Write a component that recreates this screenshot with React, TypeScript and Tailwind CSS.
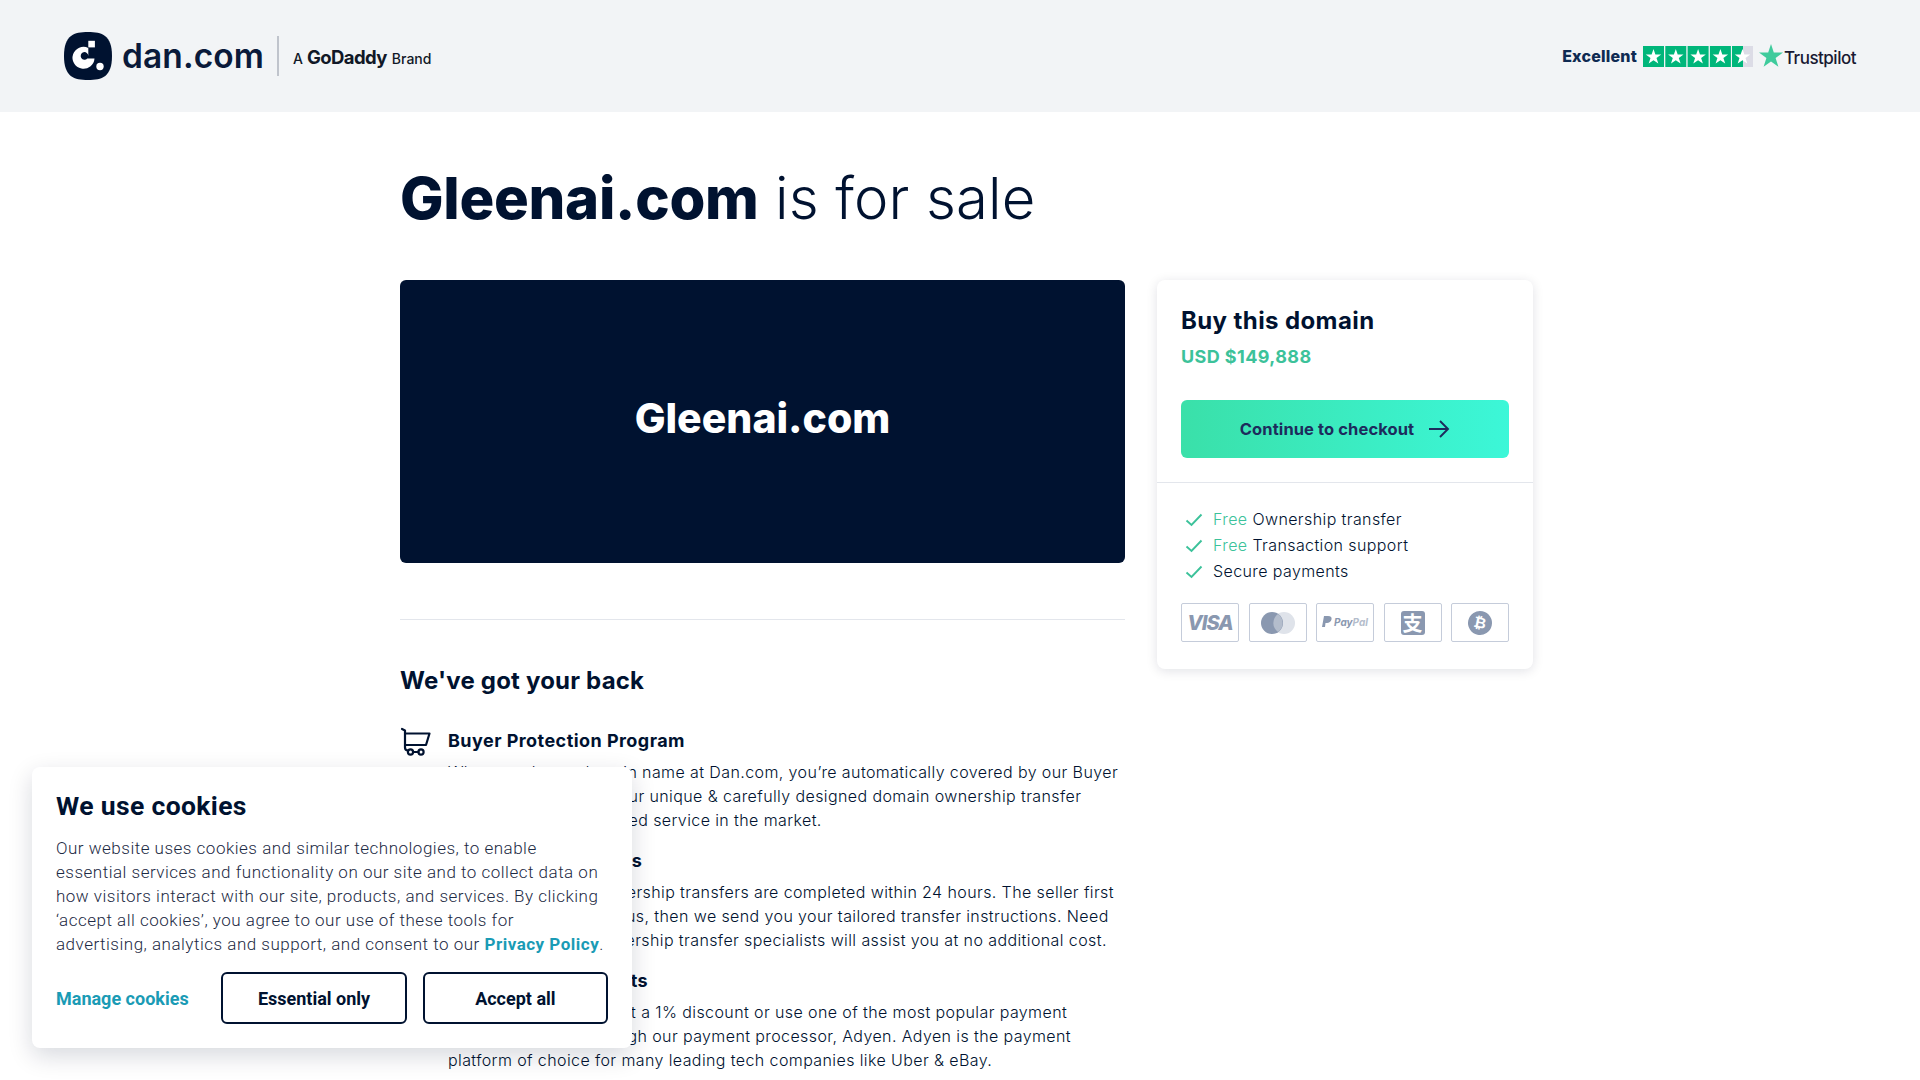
import React from "react";

const body = "font-['Inter','Liberation_Sans',sans-serif]";

function Star({ x, half }: { x: number; half?: boolean }) {
  return (
    <g transform={`translate(${x} 0)`}>
      <rect width="21" height="21" fill={half ? "#dcdce6" : "#00b67a"} />
      {half && <rect width="11" height="21" fill="#00b67a" />}
      <path d="M10.5 3l1.9 5.6h5.8l-4.700 3.400 1.800 5.600-4.800-3.400-4.800 3.400 1.800-5.600-4.700-3.400h5.800z" fill="#fff" />
    </g>
  );
}

function Check() {
  return (
    <svg width="18" height="14" viewBox="0 0 18 14" fill="none" stroke="#3cc29a" strokeWidth="1.9" className="shrink-0 mt-[6px]">
      <path d="M1.5 7.5l5 4.5 10-10.5" />
    </svg>
  );
}

function Pay({ children }: { children: React.ReactNode }) {
  return <div className="w-[58px] h-[39px] border border-[#c5ccda] rounded-[2px] flex items-center justify-center">{children}</div>;
}

function Feature({ title, lines, icon }: { title: string; lines: string[]; icon?: React.ReactNode }) {
  return (
    <div className="flex">
      <div className="w-[48px] shrink-0">{icon}</div>
      <div>
        <h3 className="text-[18px] leading-[24px] font-bold tracking-[0.45px] text-[#001230]">{title}</h3>
        <p className="mt-[7px] text-[16px] leading-[24px] font-light tracking-[0.4px] text-[#001230] whitespace-nowrap">
          {lines.map((l) => (
            <span key={l} className="block">{l}</span>
          ))}
        </p>
      </div>
    </div>
  );
}

export default function App() {
  return (
    <div className={`${body} relative h-screen overflow-hidden bg-white text-[#001230]`}>
      <header className="h-[112px] bg-[#f2f4f6] flex items-center justify-between pl-[64px] pr-[64px]">
        <div className="flex items-center">
          <svg width="48" height="48" viewBox="0 0 48 48">
            <path d="M24 0c14 0 24 3 24 24s-10 24-24 24S0 45 0 24 10 0 24 0z" fill="#001230" />
            <rect x="24.300" y="8.800" width="6.600" height="6.600" fill="#fff" />
            <path d="M24.300 15.900A11 11 0 1 0 30.500 26.500H23.300A3.800 3.800 0 1 1 24.300 23.900z" fill="#fff" />
            <circle cx="36" cy="34.500" r="3.700" fill="#fff" />
          </svg>
          <span className="ml-[10px] text-[33.500px] font-semibold tracking-[0.1px] text-[#0a1a3a]">dan.com</span>
          <div className="w-[2px] h-[40px] bg-[#c0c4cc] ml-[13px]" />
          <div className="ml-[14px] flex items-baseline text-[#111827] mt-[3px]">
            <span className="text-[14px] font-medium">A</span>
            <span className="ml-[4px] text-[18.500px] font-bold tracking-[-0.6px]">GoDaddy</span>
            <span className="ml-[5px] text-[14px] font-medium">Brand</span>
          </div>
        </div>
        <div className="flex items-center">
          <span className="text-[16px] font-extrabold tracking-[0.2px] text-[#0f2a52] mr-[6px]">Excellent</span>
          <svg width="110" height="21" viewBox="0 0 110 21">
            <Star x={0} />
            <Star x={22.3} />
            <Star x={44.6} />
            <Star x={66.9} />
            <Star x={89} half />
          </svg>
          <svg width="24" height="24" viewBox="0 0 24 24" className="ml-[6px]">
            <path d="M12 0l2.800 8.600H24l-7.400 5.400 2.800 8.800L12 17.400l-7.400 5.400L7.400 14 0 8.600h9.200z" fill="#3fcb9c" />
          </svg>
          <span className="ml-[1px] mt-[5px] text-[17px] font-medium tracking-[-0.5px] text-[#191932]">Trustpilot</span>
        </div>
      </header>

      <main className="pl-[400px] w-[1533px] box-content">
        <h1 className="mt-[48px] text-[58px] leading-[76px] tracking-[0.15px] font-light">
          <span className="font-extrabold tracking-[-0.3px]">Gleenai.com</span> is for sale
        </h1>
        <div className="mt-[44px] flex gap-[32px] items-start">
          <div className="w-[725px]">
            <div className="h-[283px] bg-[#001230] rounded-[6px] flex items-center justify-center">
              <span className="text-[41px] font-extrabold text-white mt-[-6px]">Gleenai.com</span>
            </div>
            <div className="mt-[56px] h-px bg-[#e3e6ec]" />
            <h2 className="mt-[45px] text-[24px] leading-[32px] font-bold tracking-[0.2px]">We've got your back</h2>
            <div className="mt-[32px] flex flex-col gap-[17px]">
              <Feature
                title="Buyer Protection Program"
                icon={
                  <svg width="32" height="30" viewBox="0 0 32 30" fill="none" stroke="#001230" strokeWidth="2.200" strokeLinecap="round" strokeLinejoin="round" className="mt-[-3px]">
                    <path d="M2 3l3 1.500V21.500c0 2 1 3 3 3" />
                    <path d="M5.500 7.500h24l-3.500 11.500H6" />
                    <circle cx="10.500" cy="26" r="2.600" />
                    <circle cx="21" cy="26" r="2.600" />
                    <path d="M13 26h5.500" />
                  </svg>
                }
                lines={[
                  "When you buy a domain name at Dan.com, you’re automatically covered by our Buyer",
                  "Protection. Thanks to our unique & carefully designed domain ownership transfer",
                  "process, our most trusted service in the market.",
                ]}
              />
              <Feature
                title="Fast & easy transfers"
                lines={[
                  "98% of all domain ownership transfers are completed within 24 hours. The seller first",
                  "delivers the domain to us, then we send you your tailored transfer instructions. Need",
                  "help? Our friendly ownership transfer specialists will assist you at no additional cost.",
                ]}
              />
              <Feature
                title="Hassle free payments"
                lines={[
                  "Use bank transfer to get a 1% discount or use one of the most popular payment",
                  "options, securely through our payment processor, Adyen. Adyen is the payment",
                  "platform of choice for many leading tech companies like Uber & eBay.",
                ]}
              />
            </div>
          </div>

          <aside className="w-[376px] h-[389px] bg-white rounded-[8px] shadow-[0_2px_12px_rgba(0,18,48,0.12)]">
            <div className="px-[24px] pt-[25px] pb-[24px] border-b border-[#e3e6ec]">
              <div className="text-[24px] leading-[32px] font-bold tracking-[0.4px]">Buy this domain</div>
              <div className="mt-[8px] text-[18px] leading-[24px] font-bold tracking-[0.4px] text-[#3cc29a]">USD $149,888</div>
              <button className="mt-[31px] w-full h-[58px] rounded-[6px] bg-gradient-to-r from-[#3ae0a9] to-[#3cf7d8] flex items-center justify-center gap-[14px] text-[16.500px] font-bold tracking-[0.1px] text-[#1d2b5c]">
                Continue to checkout
                <svg width="22" height="20" viewBox="0 0 22 20" fill="none" stroke="#1d2b5c" strokeWidth="1.900">
                  <path d="M1 10h19M12 2l8 8-8 8" />
                </svg>
              </button>
            </div>
            <div className="px-[24px] pt-[24px]">
              <ul className="pl-[4px] flex flex-col">
                <li className="flex gap-[10px] h-[26px] text-[16px] font-light tracking-[0.4px]"><Check /><span><span className="text-[#3cc29a]">Free</span> Ownership transfer</span></li>
                <li className="flex gap-[10px] h-[26px] text-[16px] font-light tracking-[0.4px]"><Check /><span><span className="text-[#3cc29a]">Free</span> Transaction support</span></li>
                <li className="flex gap-[10px] h-[26px] text-[16px] font-light tracking-[0.4px]"><Check /><span>Secure payments</span></li>
              </ul>
              <div className="mt-[18px] flex justify-between">
                <Pay><span className="text-[20px] font-extrabold italic tracking-[-1px] text-[#8a98b0]">VISA</span></Pay>
                <Pay>
                  <svg width="36" height="24" viewBox="0 0 36 24">
                    <circle cx="24" cy="12" r="11" fill="#dfe3ea" />
                    <circle cx="12" cy="12" r="11" fill="#8a98b0" />
                    <path d="M18 3a11 11 0 0 1 0 18 11 11 0 0 1 0-18z" fill="#b4bdcc" />
                  </svg>
                </Pay>
                <Pay>
                  <svg width="10" height="13" viewBox="0 0 10 13" className="mr-[2px]"><path d="M2 0h4c3 0 4 1.500 3.500 3.500S7 7 5 7H3.500L3 11H0z" fill="#8a98b0" /></svg>
                  <span className="text-[10px] font-bold italic text-[#8a98b0]">Pay</span>
                  <span className="text-[10px] font-bold italic text-[#b4bdcc]">Pal</span>
                </Pay>
                <Pay>
                  <div className="w-[24px] h-[24px] rounded-[3px] bg-[#8a98b0] flex items-center justify-center text-white text-[20px] leading-none font-bold font-['Noto_Sans_CJK_SC',sans-serif]">支</div>
                </Pay>
                <Pay>
                  <div className="w-[24px] h-[24px] rounded-full bg-[#8a98b0] flex items-center justify-center text-white text-[15px] font-bold rotate-12 font-['DejaVu_Sans',sans-serif]">₿</div>
                </Pay>
              </div>
            </div>
          </aside>
        </div>
      </main>

      <div className="absolute left-[32px] top-[767px] w-[600px] h-[281px] bg-white rounded-[8px] shadow-[0_8px_24px_rgba(0,18,48,0.16)] px-[24px] pt-[20px] font-['Roboto',sans-serif]">
        <h2 className="text-[26.500px] leading-[38px] font-bold tracking-[0.35px]">We use cookies</h2>
        <p className="mt-[11px] text-[17px] leading-[24px] font-light tracking-[0.5px] text-[#1c2a44] whitespace-nowrap">
          Our website uses cookies and similar technologies, to enable<br />
          essential services and functionality on our site and to collect data on<br />
          how visitors interact with our site, products, and services. By clicking<br />
          ‘accept all cookies’, you agree to our use of these tools for<br />
          advertising, analytics and support, and consent to our{" "}
          <span className="font-bold text-[#1a9bb5]">Privacy Policy</span>.
        </p>
        <div className="mt-[16px] flex items-center">
          <span className="w-[166px] text-[18px] font-bold text-[#1a9bb5]">Manage cookies</span>
          <button className="w-[186px] h-[52px] border-2 border-[#001230] rounded-[6px] text-[18px] font-bold">Essential only</button>
          <button className="ml-[16px] w-[186px] h-[52px] border-2 border-[#001230] rounded-[6px] text-[18px] font-bold">Accept all</button>
        </div>
      </div>
    </div>
  );
}
